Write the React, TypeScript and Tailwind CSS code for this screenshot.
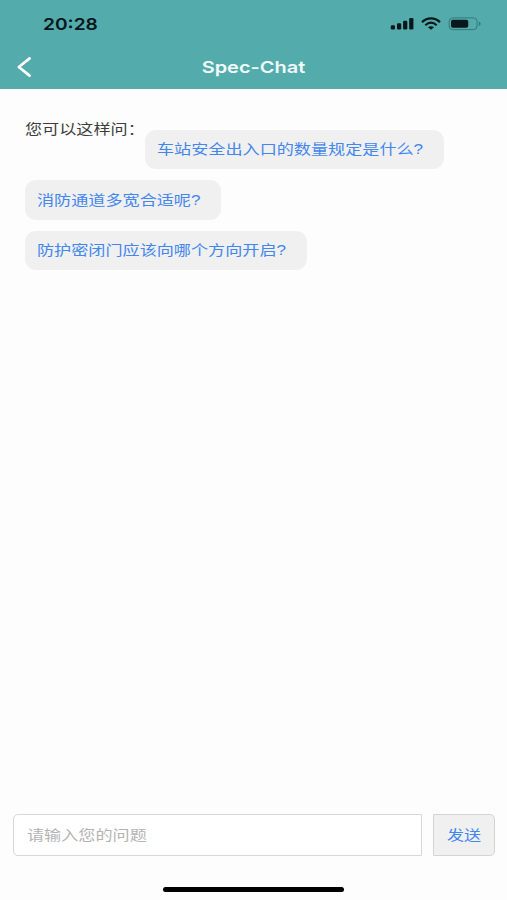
import type { ReactNode } from 'react';

const cjk = "font-['Liberation_Sans','Noto_Sans_CJK_SC',sans-serif]";

function WideText({ children }: { children: ReactNode }) {
  return (
    <span className="inline-block origin-left scale-x-[1.222] whitespace-nowrap text-[14px] leading-5">
      {children}
    </span>
  );
}

function StatusIcons() {
  return (
    <svg width="92" height="16" viewBox="0 0 92 16" fill="none">
      <g fill="#06181b">
        <rect x="0.8" y="9.2" width="4.2" height="4.3" rx="1.2" />
        <rect x="7" y="7.2" width="4.2" height="6.3" rx="1.2" />
        <rect x="13.1" y="4.8" width="4.2" height="8.7" rx="1.2" />
        <rect x="19.2" y="2" width="4.2" height="11.5" rx="1.2" />
      </g>
      <path d="M32 6.2C37.4 1.2 44.6 1.2 50 6.2" stroke="#06181b" strokeWidth="2.3" />
      <path d="M35.3 9.2C38.8 6.1 43.2 6.1 46.7 9.2" stroke="#06181b" strokeWidth="2.1" />
      <path d="M38 11.3C39.6 9.9 42.4 9.9 44 11.3L41 13.8Z" fill="#06181b" />
      <rect x="59.1" y="1.9" width="28" height="11.7" rx="3.6" stroke="#327b7d" strokeWidth="1" />
      <rect x="61" y="3.7" width="17.2" height="8.1" rx="1.8" fill="#06181b" />
      <path d="M88.8 5.6C91.2 6.4 91.2 9.2 88.8 10Z" fill="#327b7d" />
    </svg>
  );
}

function Header() {
  return (
    <header className="h-[89px] bg-[#53abab] font-[Inter,sans-serif]">
      <div className="flex h-[48px] items-center justify-between pl-[43px] pr-[25px]">
        <span className="inline-block origin-left scale-x-[1.16] text-[16.5px] font-semibold leading-5 text-[#06181b]">
          20:28
        </span>
        <StatusIcons />
      </div>
      <div className="grid h-[38px] grid-cols-[48px_1fr_48px] items-center">
        <button className="pl-[16px]" aria-label="Back">
          <svg width="17" height="22" viewBox="0 0 17 22" fill="none">
            <path d="M13.6 2.4L2.8 11L13.6 19.6" stroke="white" strokeWidth="2.7" strokeLinecap="round" strokeLinejoin="round" />
          </svg>
        </button>
        <h1 className="scale-x-[1.21] text-center text-[16.5px] font-semibold leading-5 text-[#effafa]">Spec-Chat</h1>
      </div>
    </header>
  );
}

function Chip({ className, children }: { className: string; children: ReactNode }) {
  return (
    <button className={`flex h-[39.5px] items-center rounded-[11px] bg-[#f0f0f0] pl-[12px] text-[#4386ee] ${className}`}>
      <WideText>{children}</WideText>
    </button>
  );
}

export default function App() {
  return (
    <div className={`flex h-[900px] w-[507px] flex-col overflow-hidden bg-[#fdfdfd] ${cjk}`}>
      <Header />
      <main className="flex flex-1 flex-col gap-[11px] pl-[25px] pt-[28px]">
        <div className="flex">
          <div className="w-[120px] text-[#3c3c3c]">
            <WideText>您可以这样问：</WideText>
          </div>
          <Chip className="mt-[12.5px] w-[299px]">车站安全出入口的数量规定是什么?</Chip>
        </div>
        <Chip className="w-[196px]">消防通道多宽合适呢?</Chip>
        <Chip className="w-[281.5px]">防护密闭门应该向哪个方向开启?</Chip>
      </main>
      <footer className="flex h-[86px] flex-col justify-between pb-[8px] pl-[13px] pr-[12px]">
        <div className="flex h-[42px] gap-[11px]">
          <div className="w-[409px] overflow-hidden rounded-l-[5px] border-[1.5px] border-[#d8d8d8] bg-white pl-[13px]">
            <input
              className="h-full w-[320px] origin-left scale-x-[1.222] text-[14px] outline-none placeholder:text-[#b4b4b4]"
              placeholder="请输入您的问题"
            />
          </div>
          <button className="flex w-[62px] items-center rounded-r-[5px] border-[1.5px] border-[#d4d4d4] bg-[#f0f0f0] pl-[13px] text-[#4386ee]">
            <WideText>发送</WideText>
          </button>
        </div>
        <div className="ml-[150px] h-[5px] w-[181px] rounded-full bg-black" />
      </footer>
    </div>
  );
}
